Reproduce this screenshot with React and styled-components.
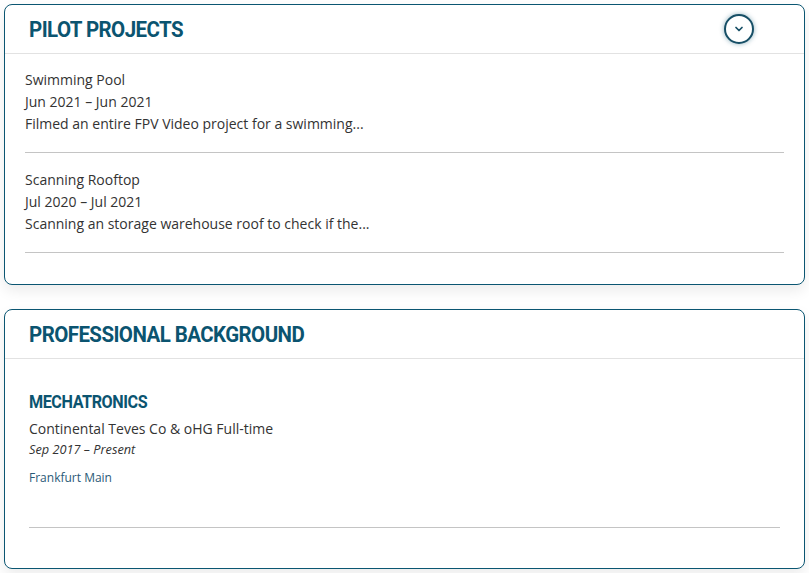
import React from "react";
import styled, { createGlobalStyle } from "styled-components";

const Global = createGlobalStyle`
  html, body { margin: 0; padding: 0; background: #ffffff; }
  body { font-family: "Open Sans", "Liberation Sans", sans-serif; color: #333; }
`;

const Page = styled.div`
  display: flex;
  flex-direction: column;
  gap: 24px;
  padding: 4px;
`;

const Card = styled.section`
  border: 1px solid #0b5672;
  border-radius: 8px;
  background: #fff;
  box-shadow: 0 6px 14px rgba(0, 0, 0, 0.08);
  overflow: hidden;
`;

const Header = styled.header`
  display: flex;
  align-items: center;
  justify-content: space-between;
  height: 48px;
  padding: 0 50px 0 24px;
  border-bottom: 1px solid #e2e2e2;
`;

const Title = styled.h2`
  margin: 0;
  font-family: Roboto, "Liberation Sans", sans-serif;
  font-weight: 700;
  font-size: 22px;
  letter-spacing: -0.6px;
  color: #0b5470;
  text-transform: uppercase;
  transform: scaleX(0.93);
  transform-origin: left center;
  white-space: nowrap;
`;

const Toggle = styled.button`
  width: 30px;
  height: 30px;
  padding: 0;
  border-radius: 50%;
  border: 2px solid #174f66;
  background: #fff;
  box-shadow: 0 0 5px rgba(11, 84, 112, 0.45);
  display: flex;
  align-items: center;
  justify-content: center;
  color: #174f66;
  cursor: pointer;
`;

const Body = styled.div`
  padding: ${(p) => p.$pad};
`;

const Item = styled.div`
  padding: ${(p) => p.$pad};
  border-bottom: 1px solid #c4c4c4;
`;

const Line = styled.div`
  font-size: 14px;
  line-height: 22px;
  color: #333;
`;

const JobTitle = styled.h3`
  margin: 0 0 5px;
  font-family: Roboto, "Liberation Sans", sans-serif;
  font-weight: 700;
  font-size: 19px;
  line-height: 22px;
  letter-spacing: -0.5px;
  color: #0b5470;
  text-transform: uppercase;
  transform: scaleX(0.85);
  transform-origin: left center;
  white-space: nowrap;
`;

const Dates = styled.div`
  font-size: 12.75px;
  font-style: italic;
  line-height: 18px;
  color: #333;
`;

const Location = styled.div`
  margin-top: 11px;
  font-size: 12px;
  line-height: 18px;
  color: #2b5a77;
`;

const Chevron = () => (
  <svg width="12" height="12" viewBox="0 0 24 24" fill="none" stroke="currentColor" strokeWidth="3.5" strokeLinecap="round" strokeLinejoin="round">
    <polyline points="6 9 12 15 18 9" />
  </svg>
);

const projects = [
  { name: "Swimming Pool", dates: "Jun 2021 – Jun 2021", desc: "Filmed an entire FPV Video project for a swimming..." },
  { name: "Scanning Rooftop", dates: "Jul 2020 – Jul 2021", desc: "Scanning an storage warehouse roof to check if the..." },
];

export default function App() {
  return (
    <>
      <Global />
      <Page>
        <Card>
          <Header>
            <Title>Pilot Projects</Title>
            <Toggle aria-label="toggle"><Chevron /></Toggle>
          </Header>
          <Body $pad="15px 20px 31px">
            {projects.map((p, i) => (
              <Item key={p.name} $pad={i === 0 ? "0 0 17px" : "16px 0 17px"}>
                <Line>{p.name}</Line>
                <Line>{p.dates}</Line>
                <Line>{p.desc}</Line>
              </Item>
            ))}
          </Body>
        </Card>
        <Card>
          <Header>
            <Title>Professional Background</Title>
          </Header>
          <Body $pad="32px 24px 40px">
            <Item $pad="0 0 40px">
              <JobTitle>Mechatronics</JobTitle>
              <Line>Continental Teves Co &amp; oHG Full-time</Line>
              <Dates>Sep 2017 – Present</Dates>
              <Location>Frankfurt Main</Location>
            </Item>
          </Body>
        </Card>
      </Page>
    </>
  );
}
